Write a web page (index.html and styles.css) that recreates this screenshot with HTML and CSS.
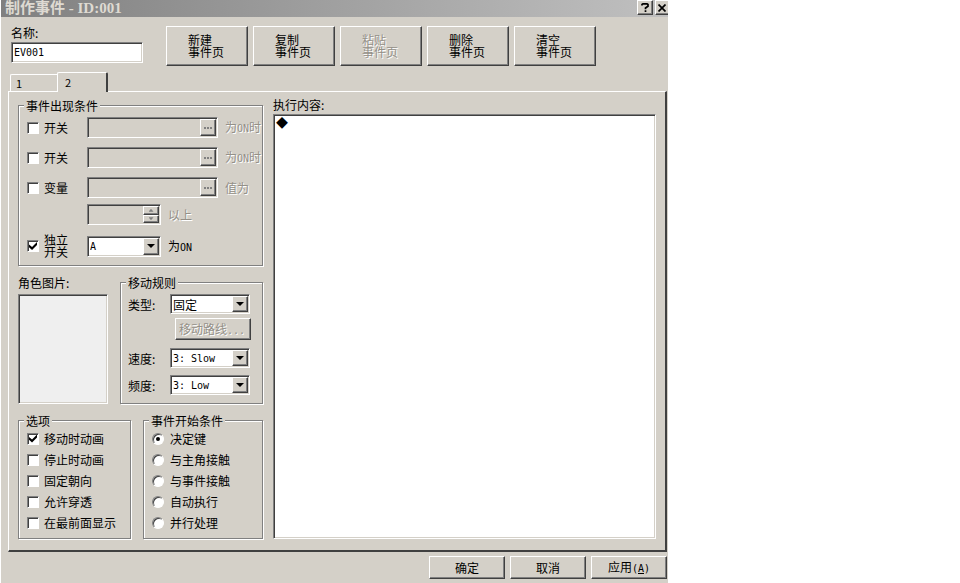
FILE: index.html
```html
<!DOCTYPE html>
<html lang="zh-CN">
<head>
<meta charset="utf-8">
<title>制作事件 - ID:001</title>
<link rel="stylesheet" href="styles.css">
</head>
<body>
<main class="dialog">
  <header class="titlebar">
    <h1 class="title">制作事件 - ID:001</h1>
    <button class="caption" type="button" aria-label="帮助"><svg width="8" height="9" viewBox="0 0 8 9"><path d="M1 2.5V1.5L2 .8H6L7 1.5V3.2L4.5 5V6.2M4.5 7.2V9" fill="none" stroke="#000" stroke-width="1.7"/></svg></button>
    <button class="caption caption-close" type="button" aria-label="关闭"><svg width="8" height="8" viewBox="0 0 8 8"><path d="M.5 .5L7.5 7.5M7.5 .5L.5 7.5" fill="none" stroke="#000" stroke-width="1.7"/></svg></button>
  </header>

  <section class="head">
    <div class="name">
      <label for="name">名称:</label>
      <input class="sunken name-input latin" id="name" type="text" value="EV001">
    </div>
    <div class="page-buttons">
      <button class="btn page-btn" type="button">新建<br>事件页</button>
      <button class="btn page-btn" type="button">复制<br>事件页</button>
      <button class="btn page-btn" type="button" disabled>粘贴<br>事件页</button>
      <button class="btn page-btn" type="button">删除<br>事件页</button>
      <button class="btn page-btn" type="button">清空<br>事件页</button>
    </div>
  </section>

  <nav class="tabs">
    <button class="tab" type="button">1</button>
    <button class="tab tab-on" type="button">2</button>
  </nav>

  <section class="panel">
    <div class="settings">
      <fieldset class="group conditions">
        <legend>事件出现条件</legend>
        <div class="cond">
          <input type="checkbox" id="sw1"><label for="sw1">开关</label>
          <span class="sunken lookup"><input type="text" aria-label="开关一" disabled><button class="btn more" type="button" aria-label="选择" disabled></button></span>
          <span class="off">为<span class="latin">ON</span>时</span>
        </div>
        <div class="cond">
          <input type="checkbox" id="sw2"><label for="sw2">开关</label>
          <span class="sunken lookup"><input type="text" aria-label="开关二" disabled><button class="btn more" type="button" aria-label="选择" disabled></button></span>
          <span class="off">为<span class="latin">ON</span>时</span>
        </div>
        <div class="cond">
          <input type="checkbox" id="var"><label for="var">变量</label>
          <span class="sunken lookup"><input type="text" aria-label="变量" disabled><button class="btn more" type="button" aria-label="选择" disabled></button></span>
          <span class="off">值为</span>
        </div>
        <div class="cond cond-value">
          <span class="sunken spinner"><input type="text" aria-label="数值" disabled><span class="steps"><button class="btn step" type="button" aria-label="增加" disabled></button><button class="btn step step-down" type="button" aria-label="减少" disabled></button></span></span>
          <span class="off">以上</span>
        </div>
        <div class="cond">
          <input type="checkbox" id="self" checked><label for="self">独立<br>开关</label>
          <span class="sunken combo combo-self"><select class="latin" aria-label="独立开关"><option>A</option></select></span>
          <span>为<span class="latin">ON</span></span>
        </div>
      </fieldset>

      <div class="pair">
        <div class="graphic">
          <span>角色图片:</span>
          <div class="sunken picture"></div>
        </div>
        <fieldset class="group movement">
          <legend>移动规则</legend>
          <div class="move">
            <label for="type">类型:</label>
            <span class="sunken combo"><select id="type"><option>固定</option></select></span>
          </div>
          <button class="btn route" type="button" disabled>移动路线<span class="latin">...</span></button>
          <div class="move">
            <label for="speed">速度:</label>
            <span class="sunken combo"><select class="latin" id="speed"><option>3: Slow</option></select></span>
          </div>
          <div class="move">
            <label for="freq">频度:</label>
            <span class="sunken combo"><select class="latin" id="freq"><option>3: Low</option></select></span>
          </div>
        </fieldset>
      </div>

      <div class="pair">
        <fieldset class="group options">
          <legend>选项</legend>
          <label class="choice"><input type="checkbox" checked>移动时动画</label>
          <label class="choice"><input type="checkbox">停止时动画</label>
          <label class="choice"><input type="checkbox">固定朝向</label>
          <label class="choice"><input type="checkbox">允许穿透</label>
          <label class="choice"><input type="checkbox">在最前面显示</label>
        </fieldset>
        <fieldset class="group trigger">
          <legend>事件开始条件</legend>
          <label class="choice"><input type="radio" name="trigger" checked>决定键</label>
          <label class="choice"><input type="radio" name="trigger">与主角接触</label>
          <label class="choice"><input type="radio" name="trigger">与事件接触</label>
          <label class="choice"><input type="radio" name="trigger">自动执行</label>
          <label class="choice"><input type="radio" name="trigger">并行处理</label>
        </fieldset>
      </div>
    </div>

    <div class="commands">
      <span>执行内容:</span>
      <ul class="sunken list">
        <li>◆</li>
      </ul>
    </div>
  </section>

  <footer class="actions">
    <button class="btn action" type="button">确定</button>
    <button class="btn action" type="button">取消</button>
    <button class="btn action" type="button">应用<span class="latin">(<u>A</u>)</span></button>
  </footer>
</main>
</body>
</html>
```
FILE: styles.css
```css
:root {
  --face: #d4d0c8;
  --light: #fff;
  --shade: #808080;
  --dark: #404040;
}

* { box-sizing: border-box; }

body {
  margin: 0;
  background: #fff;
}

body, button, input, select {
  font-family: "Noto Sans CJK SC", sans-serif;
  font-size: 12px;
  line-height: 13px;
  color: #000;
}

.latin {
  font-family: "DejaVu Sans Mono", "Noto Sans CJK SC", monospace;
  font-size: 10px;
}

.dialog {
  display: flex;
  flex-direction: column;
  max-width: 667px;
  min-height: 100vh;
  margin-left: 1px;
  overflow: hidden;
  background: var(--face);
}

/* Bevels */
.btn, .caption {
  padding: 0;
  border: 1px solid;
  border-color: var(--light) var(--dark) var(--dark) var(--light);
  box-shadow: inset -1px -1px 0 var(--shade);
  background: var(--face);
}

.sunken {
  border: 1px solid;
  border-color: var(--shade) var(--light) var(--light) var(--shade);
  box-shadow: inset 1px 1px 0 var(--dark), inset -1px -1px 0 var(--face);
  background: #fff;
}

.off, .btn:disabled {
  color: #949088;
  text-shadow: 1px 1px 0 #fff;
}

/* Title bar */
.titlebar {
  display: flex;
  align-items: flex-start;
  gap: 2px;
  height: 17px;
  padding-left: 4px;
  background: linear-gradient(90deg, #808080, #c0c0c0);
}

.title {
  flex: 1;
  margin: 0;
  font: bold 15px/16px "Liberation Serif", "Noto Sans CJK SC", serif;
  color: #dedad2;
}

.caption {
  display: flex;
  align-items: center;
  justify-content: center;
  width: 16px;
  height: 15px;
}

.caption-close {
  width: 13px;
  border-right: 0;
  box-shadow: inset 0 -1px 0 var(--shade);
}

/* Name and page buttons */
.head {
  display: flex;
  gap: 23px;
  padding: 9px 10px 0;
}

.name {
  display: flex;
  flex-direction: column;
  gap: 3px;
  width: 132px;
}

.name-input {
  width: 100%;
  height: 21px;
  padding: 0 2px;
}

.page-buttons {
  display: flex;
  gap: 5px;
}

.page-btn {
  width: 82px;
  height: 40px;
  padding-left: 21px;
  line-height: 12px;
  text-align: left;
}

/* Tabs */
.tabs {
  display: flex;
  align-items: flex-end;
  height: 25px;
  padding-left: 9px;
}

.tab {
  width: 47px;
  height: 17px;
  padding: 0 5px;
  border: 1px solid var(--light);
  border-width: 1px 0 0 1px;
  border-radius: 2px 0 0 0;
  background: var(--face);
  font-size: 11px;
  text-align: left;
}

.tab-on {
  z-index: 1;
  width: 51px;
  height: 20px;
  margin-bottom: -1px;
  padding: 0 7px;
  border-right: 2px solid var(--dark);
  border-radius: 2px 2px 0 0;
}

/* Tab page */
.panel {
  display: flex;
  gap: 10px;
  margin: 0 1px 0 7px;
  padding: 6px 9px 11px;
  border: 1px solid var(--light);
  border-right: 2px solid var(--dark);
  border-bottom: 2px solid var(--dark);
}

.settings {
  display: flex;
  flex: none;
  flex-direction: column;
  gap: 10px;
  width: 245px;
  padding-top: 1px;
}

.group {
  min-width: 0;
  margin: 0;
  padding: 0 8px;
  border: 1px solid var(--shade);
  box-shadow: 1px 1px 0 var(--light), inset 1px 1px 0 var(--light);
}

.group legend {
  margin-left: -3px;
  padding: 0 2px;
  background: var(--face);
}

.conditions { padding: 5px 0 10px 8px; }

.cond {
  display: grid;
  grid-template-columns: 17px 43px auto 1fr;
  align-items: center;
  height: 21px;
  margin-top: 9px;
  white-space: nowrap;
}

.cond:nth-of-type(1) { margin-top: 0; }

.cond label { line-height: 12px; }

.cond > :last-child { padding-left: 7px; }

.cond.cond-value {
  grid-template-columns: auto 1fr;
  margin-top: 6px;
  padding-left: 60px;
}

.lookup, .spinner {
  display: flex;
  height: 21px;
  padding: 1px;
  background: var(--face);
}

.lookup { width: 131px; }
.spinner { width: 74px; }

.lookup input, .spinner input {
  flex: 1;
  min-width: 0;
  border: 0;
  background: transparent;
}

.more {
  display: flex;
  align-items: center;
  justify-content: center;
  width: 16px;
}

.more::before {
  width: 2px;
  height: 2px;
  background: var(--shade);
  box-shadow: -3px 0 0 var(--shade), 3px 0 0 var(--shade);
  content: "";
}

.steps {
  display: flex;
  flex-direction: column;
  width: 16px;
}

.step {
  display: flex;
  flex: 1;
  align-items: center;
  justify-content: center;
}

.step::before {
  width: 5px;
  height: 3px;
  background: var(--shade);
  clip-path: polygon(50% 0, 100% 100%, 0 100%);
  content: "";
}

.step-down::before { clip-path: polygon(0 0, 100% 0, 50% 100%); }

/* Drop-downs */
.combo {
  display: grid;
  grid-template-columns: 1fr 16px;
  width: 80px;
  height: 20px;
  padding: 1px;
}

.combo-self {
  width: 74px;
  height: 21px;
}

.combo select {
  grid-area: 1 / 1 / 2 / 3;
  min-width: 0;
  padding: 0 1px;
  border: 0;
  background: transparent;
  appearance: none;
}

.combo::before {
  grid-area: 1 / 2;
  border: 1px solid;
  border-color: var(--light) var(--dark) var(--dark) var(--light);
  box-shadow: inset -1px -1px 0 var(--shade);
  background: var(--face);
  content: "";
}

.combo::after {
  grid-area: 1 / 2;
  place-self: center;
  width: 8px;
  height: 4px;
  background: #000;
  clip-path: polygon(0 0, 100% 0, 50% 100%);
  pointer-events: none;
  content: "";
}

/* Check boxes and radio buttons */
input[type="checkbox"], input[type="radio"] {
  display: grid;
  flex: none;
  place-items: center;
  width: 12px;
  height: 12px;
  margin: 0;
  border: 1px solid;
  border-color: var(--shade) var(--light) var(--light) var(--shade);
  box-shadow: inset 1px 1px 0 var(--dark);
  background: #fff;
  appearance: none;
}

input[type="radio"] { border-radius: 50%; }

input[type="checkbox"]:checked::before {
  width: 8px;
  height: 8px;
  background: #000;
  clip-path: polygon(0 30%, 38% 62%, 100% 0, 100% 38%, 38% 100%, 0 66%);
  content: "";
}

input[type="radio"]:checked::before {
  width: 4px;
  height: 4px;
  border-radius: 50%;
  background: #000;
  content: "";
}

.choice {
  display: flex;
  align-items: center;
  gap: 5px;
  height: 21px;
  white-space: nowrap;
}

/* Lower groups */
.pair {
  display: flex;
  gap: 12px;
}

.graphic {
  display: flex;
  flex-direction: column;
  gap: 5px;
  width: 90px;
}

.picture {
  height: 110px;
  background: #efefef;
}

.movement {
  flex: 1;
  padding: 5px 12px 7px 7px;
}

.movement legend { margin-left: -2px; }

.move {
  display: flex;
  align-items: center;
  justify-content: space-between;
}

.move + .move { margin-top: 7px; }

.route {
  display: block;
  width: 76px;
  height: 22px;
  margin: 4px -1px 8px auto;
  padding-left: 3px;
  text-align: left;
}

.options, .trigger {
  padding-top: 1px;
  padding-bottom: 5px;
}

.options { width: 113px; }

.trigger { flex: 1; }

.trigger .choice { gap: 6px; }

/* Command list */
.commands {
  display: flex;
  flex: 1;
  flex-direction: column;
  gap: 3px;
  min-width: 0;
}

.list {
  flex: 1;
  margin: 0;
  padding: 1px 2px;
  list-style: none;
}

/* Bottom buttons */
.actions {
  display: flex;
  justify-content: flex-end;
  gap: 5px;
  padding: 4px 1px;
}

.action {
  width: 76px;
  height: 23px;
}
```
